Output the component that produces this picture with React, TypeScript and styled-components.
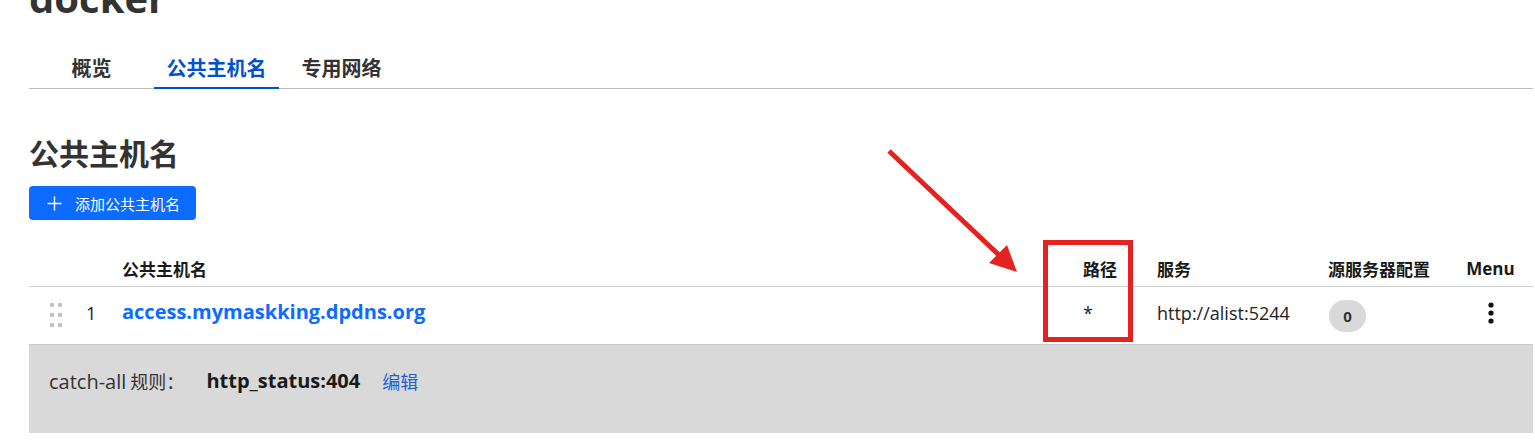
import React from "react";
import styled, { createGlobalStyle } from "styled-components";

const GlobalStyle = createGlobalStyle`
  html, body { margin: 0; padding: 0; background: #ffffff; }
  body {
    font-family: "Open Sans", "Noto Sans CJK SC", sans-serif;
    color: #222;
    overflow: hidden;
  }
`;

const Page = styled.div`
  position: relative;
  width: 1535px;
  height: 442px;
  box-sizing: border-box;
  padding: 0 2px 0 29px;
  overflow: hidden;
`;

const Title = styled.h1`
  margin: -26px 0 0;
  font-size: 40px;
  line-height: 48px;
  font-weight: 700;
  color: #333;
`;

const TabBar = styled.div`
  display: flex;
  margin-top: 25px;
  border-bottom: 1px solid #bdbdbd;
`;

const Tab = styled.div<{ $active?: boolean }>`
  width: 125px;
  height: 42px;
  box-sizing: border-box;
  margin-bottom: -1px;
  display: flex;
  align-items: center;
  justify-content: center;
  font-family: "Noto Sans CJK SC", sans-serif;
  font-size: 20px;
  font-weight: 700;
  color: ${(p) => (p.$active ? "#0052cc" : "#333")};
  border-bottom: 2px solid ${(p) => (p.$active ? "#0052cc" : "transparent")};
`;

const Heading = styled.h2`
  margin: 43px 0 14px;
  font-family: "Noto Sans CJK SC", sans-serif;
  font-size: 30px;
  line-height: 40px;
  font-weight: 700;
  color: #333;
`;

const AddButton = styled.button`
  display: inline-flex;
  align-items: center;
  gap: 13px;
  height: 34px;
  width: 167px;
  box-sizing: border-box;
  padding: 0 0 0 18px;
  border: none;
  border-radius: 4px;
  background: #0b6cff;
  color: #fff;
  font-family: "Noto Sans CJK SC", sans-serif;
  font-size: 15px;
  cursor: pointer;
`;

const Table = styled.div`
  margin-top: 30px;
`;

const Grid = styled.div`
  display: grid;
  grid-template-columns: 40px 53px 1fr 74px 171px 120px 85px;
  align-items: center;
`;

const HeaderRow = styled(Grid)`
  height: 36px;
  border-bottom: 1px solid #cfcfcf;
  font-family: "Noto Sans CJK SC", sans-serif;
  font-size: 17px;
  font-weight: 700;
  color: #1a1a1a;
`;

const HeadCell = styled.div<{ $center?: boolean }>`
  text-align: ${(p) => (p.$center ? "center" : "left")};
`;

const MenuHead = styled(HeadCell)`
  font-family: "Open Sans", sans-serif;
  font-weight: 700;
`;

const BodyRow = styled(Grid)`
  height: 57px;
  font-size: 18px;
  color: #222;
`;

const HandleCell = styled.div`
  padding-left: 20px;
  display: flex;
  align-items: center;
  padding-bottom: 2px;
`;

const IndexCell = styled.div`
  padding-left: 17px;
  padding-bottom: 6px;
`;

const HostLink = styled.a`
  display: inline-block;
  font-size: 20px;
  font-weight: 700;
  color: #0b6cff;
  text-decoration: none;
  padding-bottom: 8px;
`;

const PathCell = styled.div`
  padding-bottom: 6px;
`;

const ServiceCell = styled.div`
  padding-bottom: 6px;
`;

const Badge = styled.span`
  display: inline-flex;
  align-items: center;
  justify-content: center;
  width: 37px;
  height: 32px;
  margin-left: 1px;
  border-radius: 16px;
  background: #d9d9d9;
  font-size: 15px;
  font-weight: 700;
  color: #333;
`;

const MenuCell = styled.div`
  display: flex;
  justify-content: center;
  padding-bottom: 6px;
`;

const CatchAll = styled.div`
  display: flex;
  align-items: flex-start;
  gap: 22px;
  height: 89px;
  box-sizing: border-box;
  padding: 24px 20px 0;
  background: #d9d9d9;
  border-top: 1px solid #c9c9c9;
  font-size: 18px;
  line-height: 24px;
  color: #333;
`;

const Label = styled.span`
  font-family: "Noto Sans CJK SC", sans-serif;
`;

const Latin = styled.span`
  font-family: "Open Sans", sans-serif;
  font-size: 20px;
`;

const Rule = styled.span`
  font-size: 20px;
  font-weight: 700;
  color: #1a1a1a;
`;

const EditLink = styled.a`
  font-family: "Noto Sans CJK SC", sans-serif;
  color: #1f5fd6;
  text-decoration: none;
`;

const Overlay = styled.svg`
  position: absolute;
  left: 0;
  top: 0;
  pointer-events: none;
`;

const DragHandle = () => (
  <svg width="14" height="26" viewBox="0 0 14 26">
    {[3, 13, 23].map((y) =>
      [3, 11].map((x) => <circle key={`${x}-${y}`} cx={x} cy={y} r="2.3" fill="#c2c2c2" />)
    )}
  </svg>
);

const Kebab = () => (
  <svg width="8" height="22" viewBox="0 0 8 22">
    <circle cx="4" cy="3" r="2.6" fill="#111" />
    <circle cx="4" cy="11" r="2.6" fill="#111" />
    <circle cx="4" cy="19" r="2.6" fill="#111" />
  </svg>
);

const PlusIcon = () => (
  <svg width="15" height="15" viewBox="0 0 15 15">
    <path d="M7.5 0.5v14M0.5 7.5h14" stroke="#fff" strokeWidth="1.4" fill="none" />
  </svg>
);

export default function App() {
  return (
    <>
      <GlobalStyle />
      <Page>
        <Title>docker</Title>
        <TabBar>
          <Tab>概览</Tab>
          <Tab $active>公共主机名</Tab>
          <Tab>专用网络</Tab>
        </TabBar>
        <Heading>公共主机名</Heading>
        <AddButton>
          <PlusIcon />
          添加公共主机名
        </AddButton>
        <Table>
          <HeaderRow>
            <HeadCell />
            <HeadCell />
            <HeadCell>公共主机名</HeadCell>
            <HeadCell>路径</HeadCell>
            <HeadCell>服务</HeadCell>
            <HeadCell>源服务器配置</HeadCell>
            <MenuHead $center>Menu</MenuHead>
          </HeaderRow>
          <BodyRow>
            <HandleCell>
              <DragHandle />
            </HandleCell>
            <IndexCell>1</IndexCell>
            <div>
              <HostLink href="#">access.mymaskking.dpdns.org</HostLink>
            </div>
            <PathCell>*</PathCell>
            <ServiceCell>http://alist:5244</ServiceCell>
            <div>
              <Badge>0</Badge>
            </div>
            <MenuCell>
              <Kebab />
            </MenuCell>
          </BodyRow>
          <CatchAll>
            <Label>
              <Latin>catch-all</Latin> 规则：
            </Label>
            <Rule>http_status:404</Rule>
            <EditLink href="#">编辑</EditLink>
          </CatchAll>
        </Table>
        <Overlay width="1535" height="442" viewBox="0 0 1535 442">
          <line x1="889" y1="151" x2="1000" y2="256" stroke="#e52222" strokeWidth="5" />
          <polygon points="1017,272 989,263 1007,245" fill="#e52222" />
          <rect x="1045.5" y="242.5" width="85" height="97" fill="none" stroke="#e52222" strokeWidth="5" />
        </Overlay>
      </Page>
    </>
  );
}
